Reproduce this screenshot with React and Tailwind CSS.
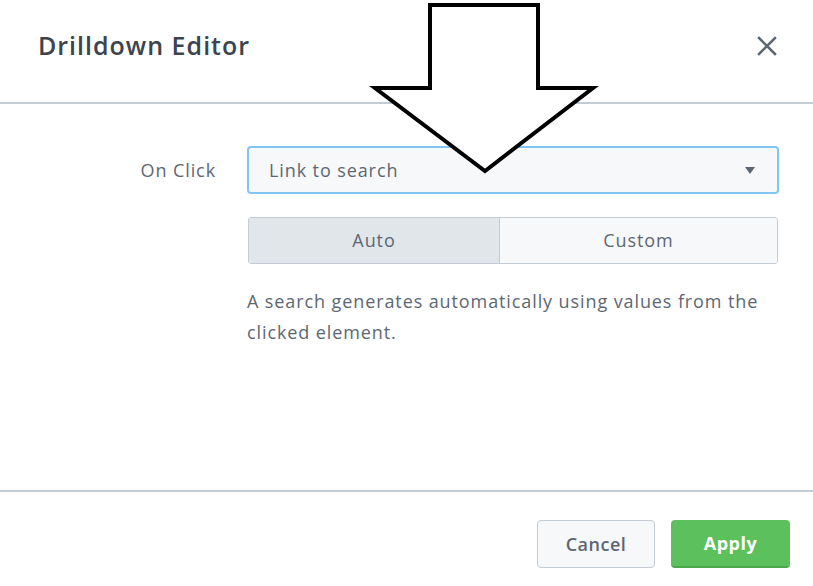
import React, { useState } from 'react';

const font = { fontFamily: '"Open Sans", Lato, sans-serif' };

// big hand-drawn arrow that sits over the dialog
const Arrow = () => (
  <svg className="absolute left-0 top-0 pointer-events-none" width="813" height="190" viewBox="0 0 813 190">
    <path
      d="M430 5 H538 V88 H593 L485 171 L375 88 H430 Z"
      fill="#ffffff"
      stroke="#000000"
      strokeWidth="4"
      strokeLinejoin="miter"
    />
  </svg>
);

const App = () => {
  const [mode, setMode] = useState('auto');

  return (
    <div className="relative w-[813px] h-[586px] bg-white overflow-hidden tracking-[0.9px]" style={font}>
      {/* Header */}
      <div className="h-[104px] flex items-center justify-between pl-[38px] pr-[34px] border-b-2 border-[#c3cbd4]">
        <h1 className="text-[25px] text-[#3c444d] font-semibold tracking-[1px] -mt-[10px]">Drilldown Editor</h1>
        <button className="w-[24px] h-[24px] flex items-center justify-center -mt-[10px]">
          <svg width="20" height="20" viewBox="0 0 20 20">
            <path d="M2 2 L18 18 M18 2 L2 18" stroke="#5c6773" strokeWidth="2.5" strokeLinecap="square" />
          </svg>
        </button>
      </div>

      {/* Body */}
      <div className="h-[386px] pt-[42px] flex">
        <div className="w-[217px] pr-[1px] text-right text-[18px] text-[#5c6773] pt-[11px]">On Click</div>
        <div className="ml-[30px] w-[532px]">
          <div className="h-[48px] rounded-[4px] border-2 border-[#7fc6f2] bg-[#f7f8fa] flex items-center justify-between pl-[20px] pr-[22px]">
            <span className="text-[18px] text-[#5c6773]">Link to search</span>
            <svg width="10" height="7" viewBox="0 0 10 7">
              <path d="M0 0 H10 L5 7 Z" fill="#5c6773" />
            </svg>
          </div>

          <div className="mt-[23px] ml-[1px] w-[530px] h-[47px] flex rounded-[3px] border border-[#c3cbd4] overflow-hidden text-[18px] text-[#5c6773]">
            <button
              onClick={() => setMode('auto')}
              className={`w-[251px] border-r border-[#c3cbd4] ${mode === 'auto' ? 'bg-[#e1e6eb]' : 'bg-[#f7f8fa]'}`}
            >
              Auto
            </button>
            <button
              onClick={() => setMode('custom')}
              className={`flex-1 ${mode === 'custom' ? 'bg-[#e1e6eb]' : 'bg-[#f7f8fa]'}`}
            >
              Custom
            </button>
          </div>

          <p className="mt-[22px] pr-[16px] text-[18px] leading-[31px] text-[#5c6773]">
            A search generates automatically using values from the clicked element.
          </p>
        </div>
      </div>

      {/* Footer */}
      <div className="border-t-2 border-[#c3cbd4] flex justify-end pr-[23px] pt-[28px] gap-[16px]">
        <button className="w-[118px] h-[48px] rounded-[4px] border border-[#c3cbd4] bg-[#f7f8fa] text-[18px] font-semibold tracking-[0.5px] text-[#5c6773]">
          Cancel
        </button>
        <button className="w-[119px] h-[48px] rounded-[4px] bg-[#5cc05c] border-b-2 border-[#4aa84a] text-[18px] font-bold tracking-[0.5px] text-white">
          Apply
        </button>
      </div>

      <Arrow />
    </div>
  );
};

export default App;
